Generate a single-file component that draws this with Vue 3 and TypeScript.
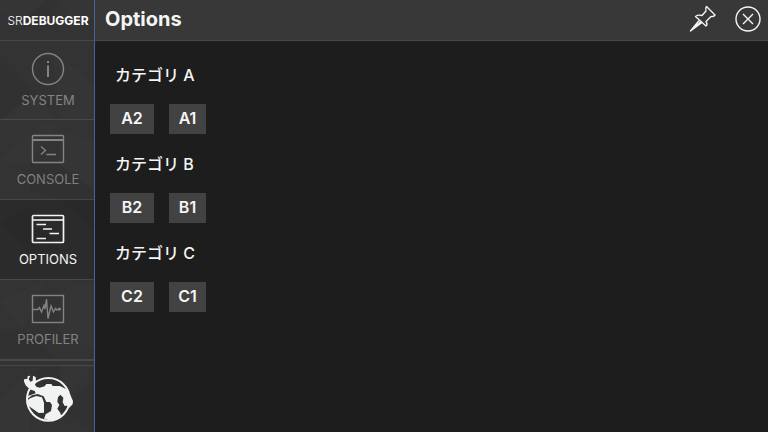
<script setup lang="ts">
import { ref } from 'vue'

type TabId = 'system' | 'console' | 'options' | 'profiler'

interface Tab {
  id: TabId
  label: string
}

interface Category {
  name: string
  actions: string[]
}

const tabs: Tab[] = [
  { id: 'system', label: 'SYSTEM' },
  { id: 'console', label: 'CONSOLE' },
  { id: 'options', label: 'OPTIONS' },
  { id: 'profiler', label: 'PROFILER' },
]

const categories: Category[] = [
  { name: 'カテゴリ A', actions: ['A2', 'A1'] },
  { name: 'カテゴリ B', actions: ['B2', 'B1'] },
  { name: 'カテゴリ C', actions: ['C2', 'C1'] },
]

const active = ref<TabId>('options')
</script>

<template>
  <div class="debugger">
    <aside class="sidebar">
      <svg class="facets" viewBox="0 0 94 432" preserveAspectRatio="none" aria-hidden="true">
        <path d="M0 0H46L24 20L0 12ZM60 0H94V18L72 28ZM0 120L36 94L58 120ZM52 50L94 86V120H60ZM0 160L44 122H60L30 164ZM60 130L94 140V190L58 164ZM0 300L46 282L22 330ZM60 290L94 282V350L58 330ZM0 400L30 372V432H0ZM60 366H94L62 400Z" fill="#fff" fill-opacity=".012" />
        <path d="M46 0L60 30L24 20ZM0 60L36 94L0 120ZM60 164L94 190V230L60 200ZM0 222L30 206L60 250L30 254ZM30 164L60 164V200L30 190ZM0 330L22 330L58 358H0ZM30 372L60 366V400ZM94 380V432L60 410Z" fill="#000" fill-opacity=".03" />
      </svg>
      <div class="brand"><span class="brand-light">SR</span>DEBUGGER</div>
      <nav class="tabs">
        <button
          v-for="tab in tabs"
          :key="tab.id"
          type="button"
          class="tab"
          :class="{ selected: active === tab.id }"
          @click="active = tab.id"
        >
          <svg class="tab-icon" viewBox="0 0 34 34" aria-hidden="true">
            <template v-if="tab.id === 'system'">
              <circle cx="17" cy="17" r="15.5" />
              <path d="M17 13.5V25M17 9V11" stroke-width="2" />
            </template>
            <template v-else-if="tab.id === 'console'">
              <rect x="1.5" y="4.5" width="31" height="27" rx="1" />
              <path d="M2 9H32" stroke-width="2" />
              <path d="M10 15.500L14.500 19.500L10 23.500M15.500 23.500H25" />
            </template>
            <template v-else-if="tab.id === 'options'">
              <rect x="1.5" y="4.5" width="31" height="27" rx="1" />
              <path d="M2 9H32" stroke-width="2" opacity=".8" />
              <path d="M5.500 13.500H15M12 18H21M18.500 22.500H28M5.500 27.500H15" />
            </template>
            <template v-else>
              <rect x="1.5" y="4.5" width="31" height="27" />
              <path d="M2 18.500H7L8.500 16.500L10.500 21L13 14.500L14 18L15.500 8L17 27.500L20 15L22.500 21L24.500 17.500L26 19L28.500 18" />
              <circle cx="28.5" cy="18" r=".8" />
            </template>
          </svg>
          <span class="tab-label">{{ tab.label }}</span>
        </button>
      </nav>
      <div class="studio">
        <svg class="studio-logo" viewBox="72 57 150 150" role="img" aria-label="Studio logo">
          <circle cx="145" cy="133" r="64" fill="none" stroke="#f1f3f3" stroke-width="6" />
          <path d="M91 62L86 72L91 80L98 77L99 62L107 66L108 79L104 87L109 95L119 98L134 94L139 87H154L158 93L180 93L199 103L211 120L219 138L218 148L207 159L201 152L194 153L188 142L190 128L181 119L174 127L172 140L178 150L172 161L181 174L184 185L168 193L148 196L132 192L137 178L153 168L156 150L150 141H139L131 124L113 117L96 121L80 133L82 124L107 115L104 108L89 103L77 91L71 77L74 72L82 72L83 64Z" fill="#f1f3f3" />
          <path d="M79 139L90 130L109 123L126 127L132 143V173L116 174L99 162L82 150Z" fill="#f1f3f3" />
        </svg>
      </div>
    </aside>

    <main class="panel">
      <header class="topbar">
        <h1>Options</h1>
        <div class="tools">
          <button type="button" class="tool" aria-label="Pin">
            <svg viewBox="0 0 28 28" aria-hidden="true">
              <path d="M18.500 1.500L27 10Q25.500 12 23 11.500L18 16.500Q20 19.500 18 21L7.500 11.500Q10 9.500 14 10.500L18 6Q17 3.500 18.500 1.500ZM11.500 15L2.500 26L14 17.500M13 16.500L2.500 26" />
            </svg>
          </button>
          <button type="button" class="tool" aria-label="Close">
            <svg viewBox="0 0 28 28" aria-hidden="true">
              <circle cx="14" cy="14" r="12" />
              <path d="M9 9L19 19M19 9L9 19" />
            </svg>
          </button>
        </div>
      </header>
      <div class="content">
        <section v-for="category in categories" :key="category.name" class="category">
          <h2>{{ category.name }}</h2>
          <div class="actions">
            <button v-for="action in category.actions" :key="action" type="button" class="action">
              {{ action }}
            </button>
          </div>
        </section>
      </div>
    </main>
  </div>
</template>

<style>
body {
  background: #1d1d1d;
}
</style>

<style scoped>
.debugger {
  display: flex;
  min-height: 100vh;
  background: #1d1d1d;
  color: #f5f5f5;
  font-family: Inter, "Noto Sans CJK JP", sans-serif;
}

.debugger * {
  box-sizing: border-box;
}

button {
  margin: 0;
  padding: 0;
  border: 0;
  background: none;
  color: inherit;
  font: inherit;
  cursor: pointer;
}

.sidebar {
  position: relative;
  display: flex;
  flex: none;
  flex-direction: column;
  width: 95px;
  border-right: 1px solid #43659c;
  background: #333333;
}

.facets {
  position: absolute;
  inset: 0;
  width: 100%;
  height: 100%;
  pointer-events: none;
}

.brand {
  display: flex;
  align-items: center;
  justify-content: center;
  height: 41px;
  padding-left: 2px;
  border-bottom: 1px solid #484848;
  font-size: 12px;
  font-weight: 700;
  color: #ffffff;
}

.brand-light {
  font-weight: 300;
}

.tabs {
  display: flex;
  flex-direction: column;
}

.tab {
  display: flex;
  flex-direction: column;
  align-items: center;
  gap: 6px;
  height: 80px;
  padding: 11px 0 0 2px;
  border-bottom: 1px solid #484848;
  color: #838383;
}

.tab:first-child {
  height: 79px;
}

.tab:last-child {
  height: 81px;
  border-bottom-width: 2px;
}

.tab.selected {
  background: rgba(0, 0, 0, 0.14);
  color: #f5f5f5;
}

.tab-icon {
  width: 34px;
  height: 34px;
  fill: none;
  stroke: currentColor;
  stroke-width: 1.4px;
}

.tab-label {
  font-size: 13px;
  line-height: 16px;
}

.tab.selected .tab-icon {
  stroke-width: 1.7px;
}

.studio {
  display: flex;
  flex: 1;
  justify-content: center;
  margin-top: 4px;
  padding: 8px 0 0 4px;
  border-top: 1px solid #484848;
}

.studio-logo {
  position: relative;
  width: 50px;
  height: 50px;
}

.panel {
  flex: 1;
  min-width: 0;
}

.topbar {
  display: flex;
  align-items: center;
  justify-content: space-between;
  height: 41px;
  padding: 0 6px 2px 10px;
  border-bottom: 1px solid #484848;
  background: #383838;
}

h1 {
  margin: 0;
  font-size: 20px;
  line-height: 24px;
  font-weight: 700;
}

.tools {
  display: flex;
  gap: 18px;
}

.tool {
  width: 28px;
  height: 28px;
}

.tool svg {
  display: block;
  fill: none;
  stroke: #f5f5f5;
  stroke-width: 1.4px;
  stroke-linejoin: round;
}

.content {
  display: flex;
  flex-direction: column;
  gap: 15px;
  padding: 19px 15px;
}

h2 {
  margin: 0 5px 14px;
  font-size: 16px;
  line-height: 30px;
  font-weight: 500;
}

.actions {
  display: grid;
  grid-template-columns: 44px 37px;
  gap: 15px;
}

.action {
  height: 30px;
  padding-bottom: 2px;
  background: #424242;
  font-size: 16px;
  line-height: 28px;
  font-weight: 600;
}
</style>
